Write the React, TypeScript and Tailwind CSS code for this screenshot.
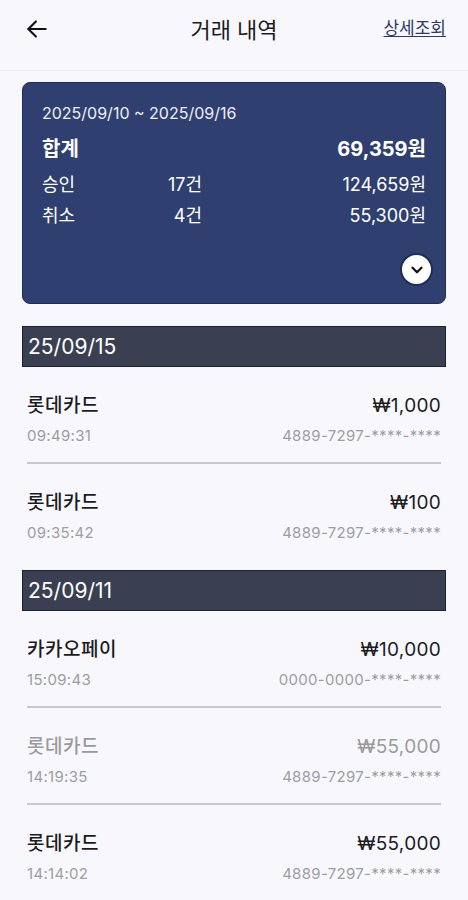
import { ChevronDown } from 'lucide-react';

interface Tx {
  name: string;
  time: string;
  amount: string;
  card: string;
  canceled?: boolean;
}

interface Group {
  date: string;
  items: Tx[];
}

const groups: Group[] = [
  {
    date: '25/09/15',
    items: [
      { name: '롯데카드', time: '09:49:31', amount: '₩1,000', card: '4889-7297-****-****' },
      { name: '롯데카드', time: '09:35:42', amount: '₩100', card: '4889-7297-****-****' },
    ],
  },
  {
    date: '25/09/11',
    items: [
      { name: '카카오페이', time: '15:09:43', amount: '₩10,000', card: '0000-0000-****-****' },
      { name: '롯데카드', time: '14:19:35', amount: '₩55,000', card: '4889-7297-****-****', canceled: true },
      { name: '롯데카드', time: '14:14:02', amount: '₩55,000', card: '4889-7297-****-****' },
    ],
  },
];

const font = { fontFamily: '"Inter", "Noto Sans CJK KR", sans-serif' };

function TxRow({ tx, last }: { tx: Tx; last: boolean }) {
  return (
    <div className={`mx-[5px] ${last ? '' : 'border-b-2 border-[#c9c9cc]'}`}>
      <div className="flex flex-col gap-[6px] pt-[25px] pb-[16px]">
        <div className={`flex justify-between items-center text-[19px] leading-[27px] ${tx.canceled ? 'text-[#9a9a9e]' : 'text-[#1c1c1e]'}`}>
          <span className="font-medium tracking-[0.5px]">{tx.name}</span>
          <span className="tracking-[0.3px]">{tx.amount}</span>
        </div>
        <div className="flex justify-between items-center text-[15px] leading-[21px] text-[#9d9da2]">
          <span className="tracking-[0.3px]">{tx.time}</span>
          <span className="tracking-[0.3px]">{tx.card}</span>
        </div>
      </div>
    </div>
  );
}

export default function App() {
  return (
    <div className="min-h-[900px] w-[468px] bg-[#f8f8fc] overflow-hidden" style={font}>
      {/* Header */}
      <div className="h-[71px] flex items-center justify-between px-[24px] border-b border-[#ececf0] relative">
        <svg width="26" height="26" viewBox="0 0 24 24" fill="none" stroke="#111" strokeWidth="1.9" strokeLinecap="round" strokeLinejoin="round" className="-mt-[12px]">
          <path d="M20 12H4" />
          <path d="M11 5l-7 7 7 7" />
        </svg>
        <span className="absolute left-1/2 -translate-x-1/2 top-[14px] text-[22px] text-[#1c1c1e]">거래 내역</span>
        <span className="text-[17px] text-[#2c3a66] underline underline-offset-2 -mt-[12px] -mr-[2px]">상세조회</span>
      </div>

      <div className="px-[22px] pt-[11px]">
        {/* Summary card */}
        <div className="bg-[#2f3f6f] border border-[#1f2c58] rounded-[8px] h-[222px] pl-[19px] pr-[19px] pt-[18px] text-white flex flex-col">
          <div className="text-[16px] leading-[24px] text-[#eef0f7]">2025/09/10 ~ 2025/09/16</div>
          <div className="flex justify-between items-center mt-[11px] text-[20px] leading-[27px] font-bold">
            <span>합계</span>
            <span>69,359원</span>
          </div>
          <div className="grid grid-cols-[60px_100px_1fr] items-center mt-[8px] text-[18px] leading-[27px]">
            <span>승인</span>
            <span className="text-right">17건</span>
            <span className="text-right">124,659원</span>
          </div>
          <div className="grid grid-cols-[60px_100px_1fr] items-center mt-[4px] text-[18px] leading-[27px]">
            <span>취소</span>
            <span className="text-right">4건</span>
            <span className="text-right">55,300원</span>
          </div>
          <div className="flex justify-end mt-[24px] -mr-[7px]">
            <div className="w-[33px] h-[33px] rounded-full bg-white border-2 border-[#1f2c58] flex items-center justify-center">
              <ChevronDown size={18} strokeWidth={3} color="#111" />
            </div>
          </div>
        </div>

        {/* Transaction groups */}
        <div className="mt-[22px] flex flex-col gap-[11px]">
          {groups.map((g) => (
            <div key={g.date}>
              <div className="h-[41px] bg-[#3a3f52] border border-[#1d2134] flex items-center px-[5px] text-[21px] text-white">
                {g.date}
              </div>
              {g.items.map((tx, i) => (
                <TxRow key={i} tx={tx} last={i === g.items.length - 1} />
              ))}
            </div>
          ))}
        </div>
      </div>
    </div>
  );
}
